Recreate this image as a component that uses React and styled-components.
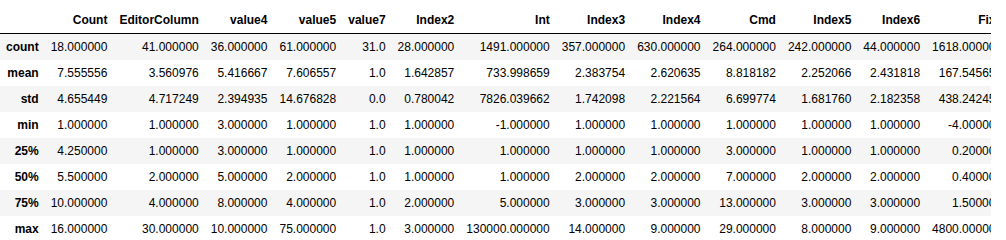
import React from "react";
import styled, { createGlobalStyle } from "styled-components";

const Global = createGlobalStyle`
  html, body { margin: 0; padding: 0; background: #fff; }
  body { font-family: "Liberation Sans", Arial, sans-serif; }
`;

const Frame = styled.div`
  width: 991px;
  overflow: hidden;
  padding-top: 7px;
`;

const Table = styled.table`
  border-collapse: collapse;
  border-spacing: 0;
  border: none;
  font-size: 12px;
  color: #000;
  table-layout: auto;
  white-space: nowrap;
`;

const Head = styled.thead`
  border-bottom: 1px solid #000;
  vertical-align: bottom;
`;

const Th = styled.th`
  padding: 6px;
  line-height: normal;
  text-align: right;
  vertical-align: middle;
  font-weight: bold;
  border: none;
`;

const Row = styled.tr`
  background: ${(p) => (p.$odd ? "#f5f5f5" : "#fff")};
`;

const Td = styled.td`
  padding: 6px;
  line-height: normal;
  text-align: right;
  vertical-align: middle;
  border: none;
`;

const columns = [
  "Count", "EditorColumn", "value4", "value5", "value7", "Index2", "Int",
  "Index3", "Index4", "Cmd", "Index5", "Index6", "Fix1",
];

const rows = [
  ["count", "18.000000", "41.000000", "36.000000", "61.000000", "31.0", "28.000000", "1491.000000", "357.000000", "630.000000", "264.000000", "242.000000", "44.000000", "1618.000000"],
  ["mean", "7.555556", "3.560976", "5.416667", "7.606557", "1.0", "1.642857", "733.998659", "2.383754", "2.620635", "8.818182", "2.252066", "2.431818", "167.545654"],
  ["std", "4.655449", "4.717249", "2.394935", "14.676828", "0.0", "0.780042", "7826.039662", "1.742098", "2.221564", "6.699774", "1.681760", "2.182358", "438.242456"],
  ["min", "1.000000", "1.000000", "3.000000", "1.000000", "1.0", "1.000000", "-1.000000", "1.000000", "1.000000", "1.000000", "1.000000", "1.000000", "-4.000000"],
  ["25%", "4.250000", "1.000000", "3.000000", "1.000000", "1.0", "1.000000", "1.000000", "1.000000", "1.000000", "3.000000", "1.000000", "1.000000", "0.200000"],
  ["50%", "5.500000", "2.000000", "5.000000", "2.000000", "1.0", "1.000000", "1.000000", "2.000000", "2.000000", "7.000000", "2.000000", "2.000000", "0.400000"],
  ["75%", "10.000000", "4.000000", "8.000000", "4.000000", "1.0", "2.000000", "5.000000", "3.000000", "3.000000", "13.000000", "3.000000", "3.000000", "1.500000"],
  ["max", "16.000000", "30.000000", "10.000000", "75.000000", "1.0", "3.000000", "130000.000000", "14.000000", "9.000000", "29.000000", "8.000000", "9.000000", "4800.000000"],
];

export default function App() {
  return (
    <>
      <Global />
      <Frame>
        <Table>
          <Head>
            <tr>
              <Th></Th>
              {columns.map((c) => (
                <Th key={c}>{c}</Th>
              ))}
            </tr>
          </Head>
          <tbody>
            {rows.map((r, i) => (
              <Row key={r[0]} $odd={i % 2 === 0}>
                <Th>{r[0]}</Th>
                {r.slice(1).map((v, j) => (
                  <Td key={j}>{v}</Td>
                ))}
              </Row>
            ))}
          </tbody>
        </Table>
      </Frame>
    </>
  );
}
